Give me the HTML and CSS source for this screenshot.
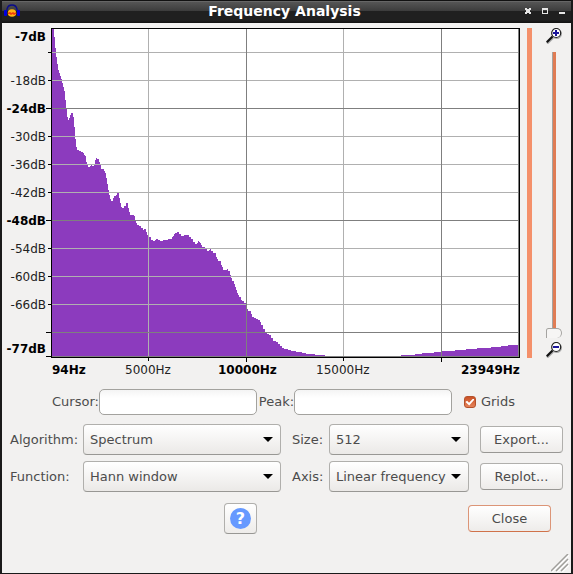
FILE: index.html
```html
<!DOCTYPE html>
<html lang="en">
<head>
    <meta charset="UTF-8">
    <meta name="viewport" content="width=device-width, initial-scale=1.0">
    <title>Frequency Analysis</title>
    <link rel="stylesheet" href="styles.css">
</head>
<body>
    <div class="window">
        <header class="titlebar">
            <svg class="app-icon" width="16" height="14" viewBox="0 0 16 14">
                <path d="M3 7V5Q4 1 8 1T13 5V7" fill="none" stroke="#0a0a8c" stroke-width="1.3"/>
                <rect x="0" y="6" width="3" height="6" rx="1" fill="#0000e0"/>
                <rect x="13" y="6" width="3" height="6" rx="1" fill="#0000e0"/>
                <ellipse cx="8" cy="9" rx="4.2" ry="3.8" fill="#ffb414"/>
                <path d="M4 9.5L6 9L7 10L9 9L10 10L12 9" fill="none" stroke="#f03a10" stroke-width="1.7"/>
            </svg>
            <h1>Frequency Analysis</h1>
            <div class="window-buttons">
                <button type="button" aria-label="Close window">
                    <svg width="6" height="6" viewBox="0 0 6 6" shape-rendering="crispEdges"><path d="M0 0H2V1H4V0H6V2H5V4H6V6H4V5H2V6H0V4H1V2H0Z" fill="#e6e6e6"/></svg>
                </button>
                <button type="button" aria-label="Maximize">
                    <svg width="6" height="6" viewBox="0 0 6 6" shape-rendering="crispEdges"><path d="M0 0H6V6H0ZM1 2V5H5V2Z" fill="#e6e6e6" fill-rule="evenodd"/></svg>
                </button>
                <button type="button" aria-label="Minimize">
                    <svg width="6" height="6" viewBox="0 0 6 6"><path d="M0 4H6V6H0Z" fill="#e6e6e6"/></svg>
                </button>
            </div>
        </header>

        <main>
            <div class="plot-area">
                <svg class="plot" viewBox="2 23 518 357" role="img" aria-label="Spectrum">
                    <rect x="51" y="28" width="469" height="330"/>
                    <rect class="paper" x="52" y="29" width="467" height="328"/>
                    <path class="spectrum" d="M52 357V29H54V37H55V48H56V57H57V64H58V70H59V73H60V76H61V79H62V83H63V87H64V91H65V100H66V109H67V117H68V120H69V118H70V115H71V113H73V117H74V127H75V139H76V147H77V150H79V151H81V152H83V153H84V155H85V156H86V162H87V165H88V167H90V166H91V165H92V166H94V164H95V160H96V158H97V159H99V162H100V165H101V169H104V171H105V173H106V178H107V184H108V190H109V195H110V199H111V201H113V198H114V196H116V195H117V193H119V198H120V203H121V207H122V208H124V206H126V203H128V208H129V212H130V215H134V216H135V220H136V223H137V225H139V226H141V228H143V230H144V229H146V232H147V235H149V237H151V240H153V241H155V240H156V239H158V240H160V241H163V240H168V239H172V237H173V236H174V234H175V233H177V232H179V234H181V236H184V235H189V237H191V239H193V242H195V244H197V243H198V241H199V242H200V243H201V245H202V247H205V249H207V251H209V250H210V249H211V251H213V253H216V257H217V259H218V261H221V265H222V267H223V270H227V269H228V271H230V275H231V278H232V281H234V284H235V287H236V290H237V293H238V295H239V297H241V300H242V301H244V303H246V307H247V309H248V311H251V314H252V317H254V318H256V319H258V320H260V322H261V325H263V329H265V332H267V334H269V335H271V338H273V341H276V342H278V344H280V346H282V348H284V349H288V350H291V351H296V352H302V353H306V354H315V355H325V356H401V355H415V354H422V353H434V352H442V351H455V350H466V349H477V348H491V347H501V346H508V345H519V357Z"/>
                    <path class="grid" d="M52 52.5H519M52 80.5H519M52 136.5H519M52 164.5H519M52 192.5H519M52 248.5H519M52 276.5H519M52 304.5H519M148.5 29V357M343.5 29V357"/>
                    <path class="grid major" d="M52 108.5H519M52 220.5H519M52 332.5H519M52 356.5H519M246.5 29V357M441.5 29V357M518.5 29V357"/>
                    <path class="tick" d="M48 52.5H51M48 80.5H51M46 108.5H51M48 136.5H51M48 164.5H51M48 192.5H51M46 220.5H51M48 248.5H51M48 276.5H51M48 304.5H51M46 332.5H51M46 356.5H51M148.5 358V361M246.5 358V362M343.5 358V361M441.5 358V362"/>
                    <g text-anchor="end">
                        <text class="strong" x="46" y="41">-7dB</text>
                        <text x="46" y="85">-18dB</text>
                        <text class="strong" x="46" y="113">-24dB</text>
                        <text x="46" y="141">-30dB</text>
                        <text x="46" y="169">-36dB</text>
                        <text x="46" y="197">-42dB</text>
                        <text class="strong" x="46" y="225">-48dB</text>
                        <text x="46" y="253">-54dB</text>
                        <text x="46" y="281">-60dB</text>
                        <text x="46" y="309">-66dB</text>
                        <text class="strong" x="46" y="353">-77dB</text>
                    </g>
                    <g>
                        <text class="strong" x="52" y="374">94Hz</text>
                        <text x="125" y="374">5000Hz</text>
                        <text class="strong" x="218" y="374">10000Hz</text>
                        <text x="316" y="374">15000Hz</text>
                        <text class="strong" x="461" y="374">23949Hz</text>
                    </g>
                </svg>

                <div class="pan-bar"></div>

                <div class="zoom">
                    <svg width="16" height="16" viewBox="0 0 16 16">
                        <path d="M1 15.5L7 9.5" stroke="#aaa" stroke-width="2.5"/>
                        <circle cx="10.7" cy="5.7" r="4.7" fill="none" stroke="#aaa" stroke-width="1.2"/>
                        <path d="M0.8 14.2L6.5 8.5" stroke="#111" stroke-width="2.2"/>
                        <circle cx="10.2" cy="5" r="4.5" fill="#fff" stroke="#222" stroke-width="1.2"/>
                        <path d="M7 5H13M10 2V8" stroke="#1c169c" stroke-width="2"/>
                    </svg>
                    <input type="range" min="0" max="100" value="0" aria-label="Vertical zoom">
                    <svg width="16" height="16" viewBox="0 0 16 16">
                        <path d="M1 15.5L7 9.5" stroke="#aaa" stroke-width="2.5"/>
                        <circle cx="10.7" cy="5.7" r="4.7" fill="none" stroke="#aaa" stroke-width="1.2"/>
                        <path d="M0.8 14.2L6.5 8.5" stroke="#111" stroke-width="2.2"/>
                        <circle cx="10.2" cy="5" r="4.5" fill="#fff" stroke="#222" stroke-width="1.2"/>
                        <path d="M7 5H13" stroke="#1c169c" stroke-width="2"/>
                    </svg>
                </div>
            </div>

            <div class="readout">
                <label for="cursor">Cursor:</label>
                <input type="text" id="cursor" readonly>
                <label for="peak">Peak:</label>
                <input type="text" id="peak" readonly>
                <label class="grids"><input type="checkbox" checked>Grids</label>
            </div>

            <div class="options">
                <label for="algorithm">Algorithm:</label>
                <div class="select">
                    <select id="algorithm"><option>Spectrum</option></select>
                </div>
                <label class="second" for="size">Size:</label>
                <div class="select">
                    <select id="size"><option>512</option></select>
                </div>
                <button type="button" class="btn">Export...</button>

                <label for="function">Function:</label>
                <div class="select">
                    <select id="function"><option>Hann window</option></select>
                </div>
                <label class="second" for="axis">Axis:</label>
                <div class="select">
                    <select id="axis"><option>Linear frequency</option></select>
                </div>
                <button type="button" class="btn">Replot...</button>
            </div>

            <div class="actions">
                <button type="button" class="btn help" aria-label="Help"><span>?</span></button>
                <button type="button" class="btn close">Close</button>
            </div>
        </main>

        <svg class="grip" width="18" height="18" viewBox="0 0 18 18">
            <path d="M1 18L18 1M6 18L18 6M11 18L18 11" stroke="#fff" stroke-width="1.5"/>
            <path d="M0 17L17 0M5 17L17 5M10 17L17 10" stroke="#a09f9b" stroke-width="1.5"/>
        </svg>
    </div>
</body>
</html>
```

FILE: styles.css
```css
* {
    box-sizing: border-box;
}

body {
    margin: 0;
    font-family: 'DejaVu Sans', sans-serif;
    font-size: 13px;
    color: #4c4c4c;
}

button,
input,
select {
    margin: 0;
    font: inherit;
    color: inherit;
}

.window {
    position: relative;
    min-height: 100vh;
    background: #f2f1f0;
    border: 2px solid #1a1a1a;
    border-top: 0;
}

/* title bar */
.titlebar {
    display: grid;
    grid-template-columns: 1fr auto 1fr;
    align-items: center;
    height: 23px;
    padding: 0 6px 0 2px;
    background: linear-gradient(#111 0, #111 1px, #777 1px, #555 2px, #3c3c3c 11px, #202020 11px, #202020 20px, #111 23px);
    color: #fff;
}

.titlebar h1 {
    margin: 0;
    font-size: 14px;
    line-height: 20px;
    padding-bottom: 2px;
}

.app-icon {
    display: block;
    margin-bottom: 2px;
}

.window-buttons {
    display: flex;
    justify-content: flex-end;
    gap: 11px;
    padding-bottom: 1px;
}

.window-buttons button {
    padding: 0;
    border: 0;
    background: none;
}

.window-buttons svg {
    display: block;
}

/* plot */
.plot-area {
    display: flex;
}

.plot {
    display: block;
    flex: 1;
    min-width: 0;
    font-size: 12px;
}

.plot .paper {
    fill: #fff;
}

.plot .spectrum {
    fill: #8c3bbe;
    shape-rendering: crispEdges;
}

.plot .grid {
    stroke: #b0b0b0;
}

.plot .major {
    stroke: #7f7f7f;
}

.plot .tick {
    stroke: #000;
}

.plot text {
    fill: #222;
}

.plot .strong {
    fill: #000;
    font-weight: bold;
}

.pan-bar {
    width: 5px;
    margin: 5px 14px 22px 7px;
    background: #f4906a;
}

.zoom {
    display: flex;
    flex-direction: column;
    align-items: center;
    width: 16px;
    margin: 5px 9px 22px 0;
}

.zoom svg {
    flex: none;
}

.zoom input {
    appearance: none;
    writing-mode: vertical-lr;
    direction: rtl;
    flex: 1;
    width: 16px;
    min-height: 0;
    margin: 8px 0 4px;
    background: linear-gradient(90deg, #a5a4a1 1px, #e07c54 1px) center / 4px 100% no-repeat;
}

.zoom input::-webkit-slider-thumb {
    appearance: none;
    width: 16px;
    height: 10px;
    border: 1px solid #a5a4a1;
    border-bottom: 0;
    border-radius: 4px 8px 8px 0;
    background: #f6f5f4;
}

/* cursor and peak */
.readout {
    display: flex;
    align-items: center;
    padding: 9px 56px 0 50px;
}

.readout input[type="text"] {
    flex: 1;
    min-width: 0;
    height: 26px;
    margin-right: 2px;
    padding: 0 6px;
    border: 1px solid #a3a29e;
    border-radius: 5px;
    background: linear-gradient(#f4f4f4, #fff 8px);
}

.readout label {
    flex: 0 0 auto;
    line-height: 26px;
}

.readout .grids {
    display: flex;
    align-items: center;
    gap: 5px;
    margin-left: 10px;
}

.grids input {
    appearance: none;
    display: grid;
    place-items: center;
    width: 12px;
    height: 12px;
    border: 1px solid #b4512b;
    border-radius: 3px;
    background: linear-gradient(#cb5225, #e58259);
}

.grids input:checked::before {
    content: '';
    width: 9px;
    height: 7px;
    background: #fff;
    clip-path: polygon(0 50%, 18% 32%, 40% 60%, 85% 0, 100% 14%, 42% 100%);
}

/* drop-downs */
.options {
    display: grid;
    grid-template-columns: 73px minmax(0, 198fr) 48px minmax(0, 140fr) 94px;
    row-gap: 6px;
    align-items: center;
    padding: 9px 8px 0;
}

.options .second {
    padding-left: 11px;
}

.options .btn {
    margin-left: 11px;
}

.select {
    position: relative;
}

.select::after {
    content: '';
    position: absolute;
    top: 13px;
    right: 8px;
    border: 5px solid transparent;
    border-top-color: #000;
    border-bottom: 0;
    pointer-events: none;
}

select {
    appearance: none;
    display: block;
    width: 100%;
    height: 31px;
    padding: 0 6px;
    border: 1px solid #b0afac;
    border-bottom-color: #989794;
    border-radius: 4px;
    background: linear-gradient(#fff, #ebe9e7);
}

.btn {
    height: 27px;
    padding: 0;
    border: 1px solid #b0afac;
    border-bottom-color: #989794;
    border-radius: 4px;
    background: linear-gradient(#fff, #eeecea);
}

/* bottom row: help sits left of the middle, close at the right */
.actions {
    display: grid;
    grid-template-columns: 222fr 33px 294fr;
    align-items: center;
    padding: 11px 20px 39px 0;
}

.help {
    grid-column: 2;
    display: grid;
    place-items: center;
    height: 31px;
}

.help span {
    width: 21px;
    height: 21px;
    border-radius: 50%;
    background: #6699ff;
    color: #fff;
    font-size: 16px;
    font-weight: bold;
    line-height: 21px;
}

.close {
    justify-self: end;
    width: 83px;
    border-color: #dc9577;
    border-bottom-color: #d0724a;
}

.grip {
    position: absolute;
    right: 2px;
    bottom: 1px;
}
```
